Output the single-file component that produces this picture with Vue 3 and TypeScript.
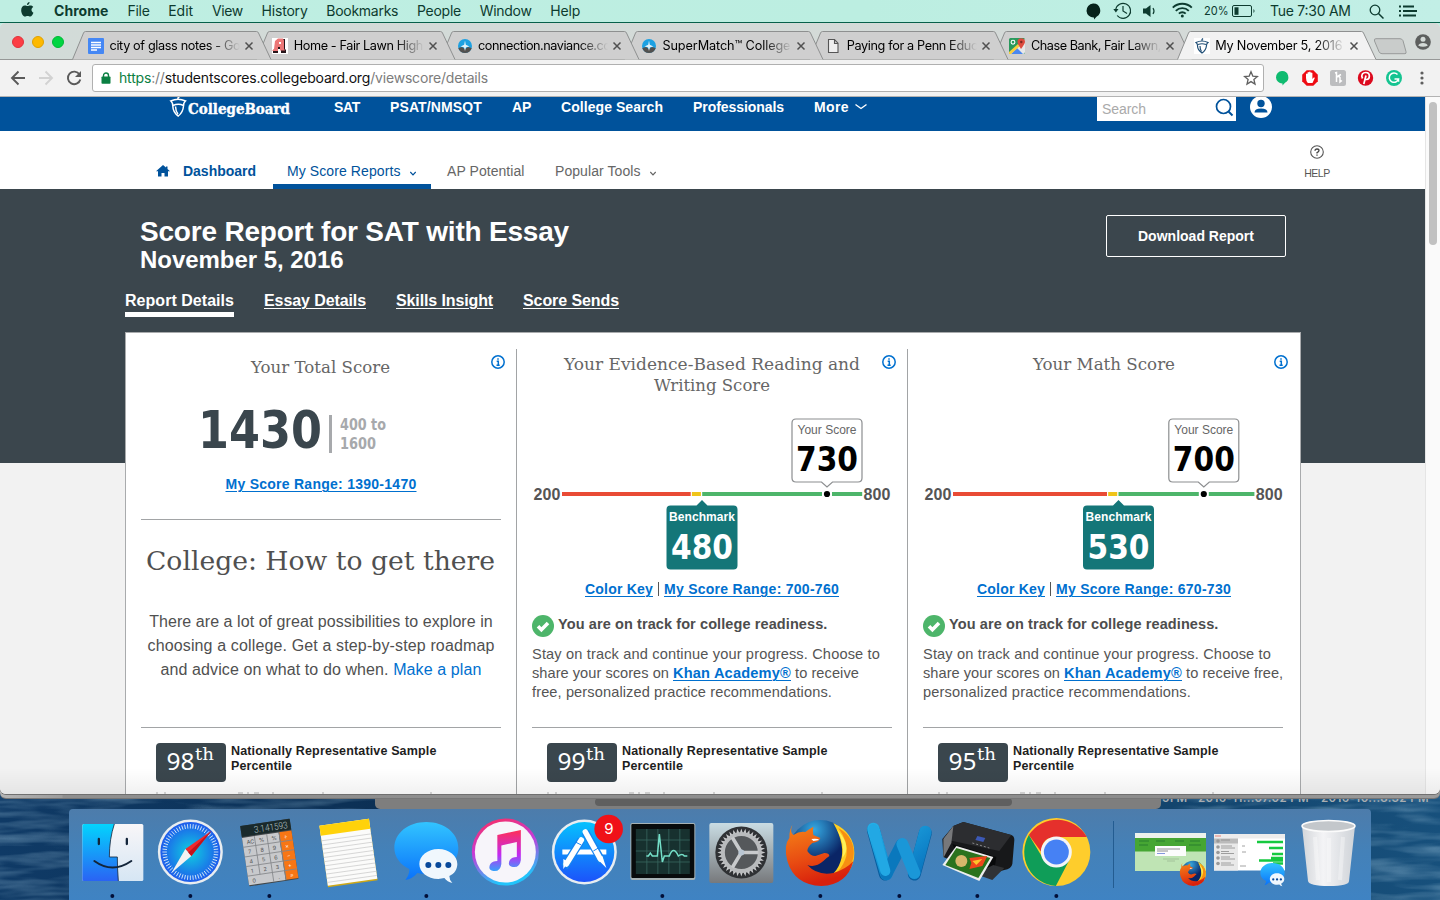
<script setup lang="ts">
interface Tab { title: string; width: number; icon: string }
interface Subject {
  heading: { text: string; x: number; y: number; width: number }[]
  score: string
  scoreX: number
  benchmark: string
  benchmarkX: number
  range: string
  percentile: string
  redEnd: number
  maxX: number
}

// Spaces the letters of a label so that it fills the given width.
const vFit = {
  mounted(el: HTMLElement, binding: { value: number }) {
    const range = document.createRange()
    range.selectNodeContents(el)
    const natural = range.getBoundingClientRect().width
    const count = (el.textContent ?? '').length
    if (count > 0) el.style.letterSpacing = `${(binding.value - natural) / count}px`
  },
}

const menus = [
  { label: 'File', width: 22 },
  { label: 'Edit', width: 25 },
  { label: 'View', width: 31 },
  { label: 'History', width: 46 },
  { label: 'Bookmarks', width: 72 },
  { label: 'People', width: 44 },
  { label: 'Window', width: 52 },
  { label: 'Help', width: 30 },
]

const tabs: Tab[] = [
  { title: 'city of glass notes - Goo', width: 138, icon: 'docs' },
  { title: 'Home - Fair Lawn High S', width: 140, icon: 'home' },
  { title: 'connection.naviance.com', width: 143, icon: 'naviance' },
  { title: 'SuperMatch™ College', width: 128, icon: 'naviance' },
  { title: 'Paying for a Penn Educa', width: 138, icon: 'page' },
  { title: 'Chase Bank, Fair Lawn,', width: 130, icon: 'maps' },
  { title: 'My November 5, 2016', width: 127, icon: 'acorn' },
]

const siteLinks = [
  { label: 'SAT', width: 26 },
  { label: 'PSAT/NMSQT', width: 92 },
  { label: 'AP', width: 19 },
  { label: 'College Search', width: 102 },
  { label: 'Professionals', width: 91 },
  { label: 'More', width: 35 },
]

const reportTabs = [
  { label: 'Report Details', width: 109 },
  { label: 'Essay Details', width: 102 },
  { label: 'Skills Insight', width: 97 },
  { label: 'Score Sends', width: 96 },
]

const subjects: Subject[] = [
  {
    heading: [
      { text: 'Your Evidence-Based Reading and', x: 32, y: 21, width: 296 },
      { text: 'Writing Score', x: 122, y: 42, width: 116 },
    ],
    score: '730', scoreX: 295, benchmark: '480', benchmarkX: 170,
    range: '700-760', percentile: '99', redEnd: 158.7, maxX: 331.5,
  },
  {
    heading: [{ text: 'Your Math Score', x: 110, y: 21, width: 142 }],
    score: '700', scoreX: 280.8, benchmark: '530', benchmarkX: 195.5,
    range: '670-730', percentile: '95', redEnd: 184, maxX: 332.7,
  },
]

const calcKeys = ['AC', '%', '%', '÷', '7', '8', '9', '×', '4', '5', '6', '−', '1', '2', '3', '+']
const ticks = Array.from({ length: 60 }, (_, i) => i * 6)
const teeth = Array.from({ length: 36 }, (_, i) => i * 10)
</script>

<template>
  <div class="desktop">
    <svg class="wallpaper" viewBox="0 0 1440 110" preserveAspectRatio="none">
      <defs>
        <linearGradient id="sea" x1="0" x2="1"><stop offset="0" stop-color="#0f3a66" /><stop offset=".4" stop-color="#0a2b4c" /><stop offset="1" stop-color="#17507c" /></linearGradient>
        <filter id="waves" x="0" y="0" width="100%" height="100%"><feTurbulence type="fractalNoise" baseFrequency=".014 .09" numOctaves="3" seed="8" /><feColorMatrix values="0 0 0 0 .3  0 0 0 0 .5  0 0 0 0 .66  1.3 0 0 0 -.5" /></filter>
      </defs>
      <rect width="1440" height="110" fill="url(#sea)" />
      <rect width="1440" height="110" filter="url(#waves)" opacity=".75" />
    </svg>
    <div class="files"><span v-fit="24">5 PM</span><span v-fit="111">2016-11...07.02 PM</span><span v-fit="108">2016-10...8.32 PM</span></div>
    <div class="back-window"><i></i></div>
    <div class="under-window"></div>

    <header class="menubar">
      <svg class="apple" viewBox="0 0 14 16"><path d="M9.2 0c.2 1.600-1.200 3.200-2.700 3.100C6.300 1.600 7.700.2 9.200 0zM11.300 8.300c0-1.500.8-2.500 1.900-3.100-.8-1.100-2-1.600-3.200-1.600-1.200 0-2.100.7-2.900.7-.8 0-1.700-.7-2.900-.7C2 3.700.2 5.400.2 8.700c0 3.400 2.200 6.900 4.100 6.900 1 0 1.500-.6 2.800-.6s1.700.6 2.700.6c1.600 0 3-2.400 3.600-4.100-1.200-.5-2.100-1.700-2.100-3.200z" /></svg>
      <b v-fit="54.500" class="menu-app">Chrome</b>
      <span v-for="m in menus" :key="m.label" v-fit="m.width" class="menu-item">{{ m.label }}</span>
      <svg class="status" viewBox="0 0 360 22">
        <path d="M13 3.500a7 7 0 0 1 3.500 13.200L14 19.500v-2A7 7 0 0 1 13 3.500z" fill="#06231b" />
        <g fill="none" stroke="#0d3b2f" stroke-width="1.200"><path d="M35.700 9.500a7.500 7.500 0 1 1 1.500 6" /><path d="M43 6v5l4 2.500" /></g>
        <path d="M33.300 9h5.200l-2.600 3.600z" fill="#0d3b2f" />
        <path d="M63 8.500h3l4.500-3.500v12L66 13.500h-3z" fill="#0d3b2f" /><path d="M73 8q2 3 0 6" fill="none" stroke="#0d3b2f" stroke-width="1.200" />
        <g fill="none" stroke="#0d3b2f" stroke-width="1.900"><path d="M92.800 7.700a13.500 13.500 0 0 1 19 0M95.800 10.800a9.200 9.200 0 0 1 13 0M98.900 13.700a4.800 4.800 0 0 1 6.800 0" /></g><circle cx="102.300" cy="16" r="1.500" fill="#0d3b2f" />
        <text x="124" y="15" textLength="24.500" lengthAdjust="spacingAndGlyphs" font-size="12">20%</text>
        <rect x="152.500" y="5.500" width="19" height="11" rx="1.500" fill="none" stroke="#0d3b2f" /><rect x="154.500" y="7.300" width="4" height="7.500" fill="#0d3b2f" /><path d="M173.500 9q2 2 0 4z" fill="#0d3b2f" />
        <text x="190" y="16" textLength="81" font-size="14">Tue 7:30 AM</text>
        <circle cx="295" cy="10" r="4.800" fill="none" stroke="#0d3b2f" stroke-width="1.300" /><path d="M298.500 13.500l5 5" stroke="#0d3b2f" stroke-width="1.500" />
        <path d="M319 6.500h2M323 6.500h11M319 11h2M323 11h14M319 15.500h2M323 15.500h13" stroke="#0d3b2f" stroke-width="1.900" />
      </svg>
    </header>

    <main class="window">
      <div class="tabstrip">
        <div class="lights"><i class="red"></i><i class="amber"></i><i class="green"></i></div>
        <div v-for="(t, i) in tabs" :key="t.title" class="tab" :class="[`tab-${i}`, { active: i === 6 }]">
          <svg class="shape" viewBox="0 0 200 30"><path d="M.5 28.500L11.500 2q.6-1.500 2-1.500h171q1.400 0 2 1.500L199 28.500" /></svg>
          <svg class="favicon" viewBox="0 0 16 16">
            <g v-if="t.icon === 'docs'"><rect width="16" height="16" rx="1" fill="#4587f4" /><path d="M3 4.500h10M3 7h10M3 9.500h10M3 12h6" stroke="#fff" stroke-width="1.300" /></g>
            <g v-else-if="t.icon === 'home'"><rect width="16" height="16" fill="#fff" /><path d="M1 15V12l2-1 1-8 3-2h6v10l1 1v3h-5v-4H6v4z" fill="#27151a" /><path d="M0 13l2-2 1-8 3-2.500h5l1 2v8l1 2H8V9H6v4z" fill="#ec7777" /><path d="M7 4h2v2H7z" fill="#fff" /></g>
            <g v-else-if="t.icon === 'naviance'"><circle cx="8" cy="8" r="7" fill="#1da1e2" /><path d="M1.300 10a7 7 0 0 0 13.400 0L11 9l-3 2-3-2z" fill="#52514f" /><path d="M8 2.500l.8 4.200L12.500 8.500 9 9.300 8 13 7 9.300 3.500 8.500l3.700-1.800z" fill="#e3f2f9" /></g>
            <path v-else-if="t.icon === 'page'" d="M3.500 1.500h6l3.500 3.700v9.300H3.500zM9.500 1.500v4H13" fill="#eee" stroke="#555" stroke-width="1.100" />
            <g v-else-if="t.icon === 'maps'"><rect width="16" height="16" rx="1.500" fill="#29995c" /><path d="M0 16L16 1v13q0 2-2 2z" fill="#e8e8e8" /><path d="M2 16l6-6 6 6z" fill="#4a87f1" /><path d="M0 14L9 6l2 2-9 8H0z" fill="#f9cd3d" /><path d="M12 11Q8.500 5.500 8.500 4a3.700 3.700 0 0 1 7.500 0q0 1.500-4 7z" fill="#dd4b3e" /><circle cx="12.300" cy="4" r="1.200" fill="#7c2720" /><circle cx="4" cy="4.200" r="1.900" fill="none" stroke="#fff" stroke-width="1.100" /></g>
            <g v-else><rect width="16" height="16" fill="#fff" /><path d="M2 4.500q6-3 12 0-1.500 1-1.500 3Q12 12.500 8 15 3.500 12 3.500 7.500q0-2-1.500-3zM4 6.500q4-1.500 8 0M8 3V1.500L9 .5M6 8q0 3.500 1.500 5.500" fill="none" stroke="#204f76" stroke-width="1.200" /></g>
          </svg>
          <div class="title"><span v-fit="t.width">{{ t.title }}</span></div>
          <svg class="close" viewBox="0 0 8 8"><path d="M.5.5l7 7M7.500.5l-7 7" stroke="#505050" stroke-width="1.500" /></svg>
        </div>
        <svg class="newtab" viewBox="0 0 34 18"><path d="M3 .7h24q2 0 3 2l3 11q.5 2-1 2H9q-2 0-3-2L1.500 3Q.700.700 3 .700z" fill="#c9cccb" stroke="#989b9a" /></svg>
        <svg class="person" viewBox="0 0 16 16"><circle cx="8" cy="8" r="7.800" fill="#5d5f5e" /><circle cx="8" cy="5.300" r="2.500" fill="#d4dad7" /><path d="M3.300 11.800Q4 9 8 9t4.700 2.800q-4.700 1.800-9.400 0z" fill="#d4dad7" /></svg>
      </div>

      <div class="toolbar">
        <svg class="navicons" viewBox="0 0 92 36">
          <g fill="none" stroke-width="1.900"><path d="M25 18H12.500M18.500 11.500L12 18l6.500 6.500" stroke="#5a5a5a" /><path d="M39 18h12.500M45.500 11.500L52 18l-6.500 6.500" stroke="#d2d2d2" /><path d="M79.500 14.500a6.300 6.300 0 1 0 .8 5" stroke="#5a5a5a" /></g><path d="M81 11v6h-6z" fill="#5a5a5a" />
        </svg>
        <div class="omnibox">
          <svg class="lock" viewBox="0 0 10 12"><rect x=".5" y="4.500" width="9" height="7.200" rx=".8" fill="#0b8043" /><path d="M2.500 5V3.500a2.500 2.500 0 0 1 5 0V5" fill="none" stroke="#0b8043" stroke-width="1.400" /></svg>
          <span v-fit="369" class="url"><span class="secure">https</span><span class="dim">://</span>studentscores.collegeboard.org<span class="dim">/viewscore/details</span></span>
          <svg class="star" viewBox="0 0 16 16"><path d="M8 1.800l1.800 4.300 4.600.4-3.500 3 1.100 4.600L8 11.600l-4 2.500 1.100-4.600-3.500-3 4.600-.4z" fill="none" stroke="#606060" stroke-width="1.300" /></svg>
        </div>
        <svg class="extensions" viewBox="0 0 170 36">
          <path d="M12 11a6.200 6.200 0 0 1 3 11.700L12.500 25.500v-2A6.200 6.200 0 0 1 12 11z" fill="#0fbb70" />
          <path d="M36.700 10.200h6.600l4.500 4.600v6.400l-4.500 4.600h-6.600l-4.500-4.600v-6.400z" fill="#ee0b13" /><path d="M36 18v-4q.8-1 1.500 0v-1.500q.8-1 1.600 0V12q.8-1 1.600 0v1q1-1 1.700 0v6l1.300-1.500q1.500-.3 1 .7L42.500 23h-4.700Q36 21 36 18z" fill="#fff" />
          <rect x="60" y="10" width="16" height="16" rx="2.500" fill="#bcbdbf" /><path d="M65 13l1.500-.5V22M66 17.500q3-2 4 0V22l2-1.500M66.500 17l4.500-2.500" fill="none" stroke="#fff" stroke-width="1.500" />
          <circle cx="95.500" cy="18" r="7.700" fill="#dc0a1e" /><path d="M92.500 18.500c-2-4 .5-6 3.300-6 5 0 4.200 7 .8 7q-1.500 0-1.800-1.200M96 15.500L93.800 24" fill="none" stroke="#fff" stroke-width="1.700" />
          <circle cx="124" cy="18" r="8" fill="#15c491" /><path d="M127.500 14.500a4.700 4.700 0 1 0 1 4.500h-4M128.500 19v2.800" fill="none" stroke="#fff" stroke-width="1.500" />
          <g fill="#5e5e5e"><circle cx="152" cy="13" r="1.600" /><circle cx="152" cy="18" r="1.600" /><circle cx="152" cy="23" r="1.600" /></g>
        </svg>
      </div>

      <div class="viewport">
        <div class="page">
          <nav class="site-nav">
            <svg class="cb-logo" viewBox="0 0 122 24"><path d="M.8 4Q8 .5 15.500 4 13.500 5.500 13.500 9 13 15.500 8.300 19 3 15.500 2.800 9q0-3.500-2-5zM3 8.500q5.500-2.500 10.500 0M8 2.500q-.500-2 1.500-3M5.500 9.500q.2 5 2.500 7.500" fill="none" stroke="#fff" stroke-width="1.500" /><text x="18" y="17" textLength="102" lengthAdjust="spacingAndGlyphs" font-size="15.500" fill="#fff" stroke="#fff" stroke-width=".4">CollegeBoard</text></svg>
            <a v-for="l in siteLinks" :key="l.label" v-fit="l.width">{{ l.label }}</a>
            <svg class="more" viewBox="0 0 12 8"><path d="M.5 1.500L6 5.500l5.500-4" fill="none" stroke="#fff" stroke-width="1.400" /></svg>
            <div class="search"><span v-fit="44">Search</span><svg viewBox="0 0 20 20"><circle cx="9.500" cy="9.500" r="7" fill="none" stroke="#00529b" stroke-width="1.700" /><path d="M14.500 14.500l4 4" stroke="#00529b" stroke-width="2" /></svg></div>
            <svg class="account" viewBox="0 0 22 22"><circle cx="11" cy="11" r="11" fill="#fff" /><circle cx="11" cy="7.500" r="3.700" fill="#00529b" /><path d="M4.500 16.500q0-4 6.500-4t6.500 4z" fill="#00529b" /></svg>
          </nav>

          <nav class="sub-nav">
            <div class="dash"><svg viewBox="0 0 14 12"><path d="M7 0l3 2.500V1.500h1.500V4L14 6.300h-2V11.500H8.500V8h-3v3.500H2V6.300H0z" fill="#00529b" /></svg><b v-fit="73">Dashboard</b></div>
            <div class="current"><span v-fit="113.500">My Score Reports</span><svg viewBox="0 0 6 5"><path d="M.3 1L3 3.800 5.700 1" fill="none" stroke="#00529b" stroke-width="1.200" /></svg></div>
            <span v-fit="77.500" class="plain ap">AP Potential</span>
            <span v-fit="85.500" class="plain">Popular Tools</span>
            <svg class="caret" viewBox="0 0 6 5"><path d="M.3 1L3 3.800 5.700 1" fill="none" stroke="#666" stroke-width="1.200" /></svg>
            <div class="help"><svg viewBox="0 0 14 14"><circle cx="7" cy="7" r="6.300" fill="none" stroke="#555" stroke-width="1.100" /><path d="M5 5.700Q5 4 7 4t2 1.600Q9 6.700 7 7.700v.8M7 9.500v1.200" fill="none" stroke="#444" stroke-width="1.300" /></svg><span v-fit="25.500">HELP</span></div>
          </nav>

          <section class="hero">
            <div class="hero-top">
              <div><h1><span v-fit="429">Score Report for SAT with Essay</span></h1><h2><span v-fit="203.500">November 5, 2016</span></h2></div>
              <div class="download"><span v-fit="116">Download Report</span></div>
            </div>
            <div class="report-tabs"><a v-for="(r, i) in reportTabs" :key="r.label" :class="{ on: i === 0 }"><span v-fit="r.width">{{ r.label }}</span></a></div>
          </section>

          <section class="card">
            <article class="column">
              <svg class="info" viewBox="0 0 14 14"><circle cx="7" cy="7" r="6.200" /><path d="M5.700 6.200h1.600v4M5.500 10.300h3.200M7 3.200v1.500" /></svg>
              <svg class="slab total-heading" viewBox="0 0 360 30"><text x="110" y="24" textLength="139" lengthAdjust="spacingAndGlyphs" font-size="16.500">Your Total Score</text></svg>
              <svg class="slab total" viewBox="0 0 360 50"><text class="big" x="57" y="43" textLength="124" lengthAdjust="spacingAndGlyphs" font-size="52">1430</text><rect x="188" y="10" width="3" height="38" fill="#a7a9ac" /><text class="range" x="199" y="25" textLength="46" lengthAdjust="spacingAndGlyphs" font-size="15.500">400 to</text><text class="range" x="199" y="44" textLength="36" lengthAdjust="spacingAndGlyphs" font-size="15.500">1600</text></svg>
              <div class="links total-link"><a v-fit="191">My Score Range: 1390-1470</a></div>
              <hr class="rule-a" />
              <svg class="slab college" viewBox="0 0 360 35"><text x="5" y="25" textLength="349" lengthAdjust="spacingAndGlyphs" font-size="25.500">College: How to get there</text></svg>
              <p class="plan">
                <span v-fit="343.500">There are a lot of great possibilities to explore in</span>
                <span v-fit="347">choosing a college. Get a step-by-step roadmap</span>
                <span v-fit="321">and advice on what to do when. <a>Make a plan</a></span>
              </p>
              <hr class="rule-b" />
              <div class="percentile">
                <svg viewBox="0 0 70 39"><rect width="70" height="39" rx="4" fill="#3a464d" /><text class="rank" x="10.500" y="27" textLength="28" lengthAdjust="spacingAndGlyphs" font-size="23.500">98</text><text x="39" y="17" textLength="19" lengthAdjust="spacingAndGlyphs" font-size="16.500">th</text></svg>
                <div><b v-fit="205.500">Nationally Representative Sample</b><b v-fit="61">Percentile</b></div>
              </div>
              <svg class="peek" viewBox="0 0 360 2"><path d="M15 1h2M23 1h2M97 1h5M106 1h2M113 1h5M131 1h2M181 1h2M289 1h2" stroke="#b3b3b3" /></svg>
            </article>

            <article v-for="s in subjects" :key="s.score" class="column">
              <svg class="info" viewBox="0 0 14 14"><circle cx="7" cy="7" r="6.200" /><path d="M5.700 6.200h1.600v4M5.500 10.300h3.200M7 3.200v1.500" /></svg>
              <svg class="slab heading" viewBox="0 0 360 50"><text v-for="h in s.heading" :key="h.text" :x="h.x" :y="h.y" :textLength="h.width" lengthAdjust="spacingAndGlyphs" font-size="16.500">{{ h.text }}</text></svg>
              <svg class="chart" viewBox="0 0 360 165">
                <text class="end" x="1.500" y="90" textLength="27">200</text><text class="end" :x="s.maxX" y="90" textLength="27">800</text>
                <rect x="30" y="82" :width="s.redEnd - 30" height="4" fill="#e94b35" />
                <rect :x="s.redEnd + 1.200" y="82" width="9" height="4" fill="#f0c419" />
                <rect :x="s.redEnd + 11.500" y="82" :width="s.scoreX - 5 - s.redEnd - 11.500" height="4" fill="#4db56a" />
                <rect :x="s.scoreX + 5" y="82" :width="s.maxX - 1.300 - s.scoreX - 5" height="4" fill="#4db56a" />
                <circle :cx="s.scoreX" cy="84" r="3.100" />
                <g :transform="`translate(${s.scoreX} 0)`">
                  <path d="M-31 9h62q4 0 4 4v55q0 4-4 4H5.500L0 77l-5.500-5H-31q-4 0-4-4V13q0-4 4-4z" fill="#fff" stroke="#8c8e90" stroke-width="1.200" />
                  <text class="label" x="-29.500" y="24" textLength="59">Your Score</text><text class="number" x="-31" y="61" textLength="62" lengthAdjust="spacingAndGlyphs">{{ s.score }}</text>
                </g>
                <g :transform="`translate(${s.benchmarkX} 0)`">
                  <path d="M-31.500 95.500h26L0 90l5.500 5.500h26q4 0 4 4v56q0 4-4 4h-63q-4 0-4-4v-56q0-4 4-4z" fill="#147678" />
                  <text class="label bench" x="-33" y="111" textLength="66">Benchmark</text><text class="number white" x="-31" y="148.500" textLength="62" lengthAdjust="spacingAndGlyphs">{{ s.benchmark }}</text>
                </g>
              </svg>
              <div class="links"><a v-fit="68">Color Key</a><i></i><a v-fit="175">My Score Range: {{ s.range }}</a></div>
              <div class="track"><svg viewBox="0 0 22 22"><circle cx="11" cy="11" r="11" fill="#4db56a" /><path d="M6 11.300l3.400 3.400 6.600-6.600" fill="none" stroke="#fff" stroke-width="3.600" /></svg><b v-fit="269.500">You are on track for college readiness.</b></div>
              <p class="advice">
                <span v-fit="348">Stay on track and continue your progress. Choose to</span>
                <span class="mixed"><span v-fit="137">share your scores on</span><a v-fit="118">Khan Academy®</a><span v-fit="64">to receive</span><template v-if="s.score === '700'"><span v-fit="29">free,</span></template></span>
                <span v-if="s.score === '700'" v-fit="268">personalized practice recommendations.</span>
                <span v-else v-fit="300">free, personalized practice recommendations.</span>
              </p>
              <hr class="rule-c" />
              <div class="percentile">
                <svg viewBox="0 0 70 39"><rect width="70" height="39" rx="4" fill="#3a464d" /><text class="rank" x="10.500" y="27" textLength="28" lengthAdjust="spacingAndGlyphs" font-size="23.500">{{ s.percentile }}</text><text x="39" y="17" textLength="19" lengthAdjust="spacingAndGlyphs" font-size="16.500">th</text></svg>
                <div><b v-fit="205.500">Nationally Representative Sample</b><b v-fit="61">Percentile</b></div>
              </div>
              <svg class="peek" viewBox="0 0 360 2"><path d="M15 1h2M23 1h2M97 1h5M106 1h2M113 1h5M131 1h2M181 1h2M289 1h2" stroke="#b3b3b3" /></svg>
            </article>
          </section>
        </div>
        <div class="scrollbar"><i></i></div>
        <div class="bottom-fade"></div>
      </div>
    </main>

    <footer class="dock">
      <svg width="0" height="0" class="defs">
        <defs>
          <linearGradient id="finderL" x2="0" y2="1"><stop stop-color="#03d4fd" /><stop offset="1" stop-color="#2a63f4" /></linearGradient>
          <linearGradient id="finderR" x2="0" y2="1"><stop stop-color="#f8f6f8" /><stop offset="1" stop-color="#d6e6f4" /></linearGradient>
          <radialGradient id="safari"><stop stop-color="#0fd0e0" /><stop offset="1" stop-color="#1e5ceb" /></radialGradient>
          <linearGradient id="bubble" x2="0" y2="1"><stop stop-color="#32c4ff" /><stop offset="1" stop-color="#0a72fa" /></linearGradient>
          <linearGradient id="tunes" x2=".3" y2="1"><stop stop-color="#ff2d55" /><stop offset=".5" stop-color="#c63bd8" /><stop offset="1" stop-color="#21c4fb" /></linearGradient>
          <linearGradient id="note" x2="0" y2="1"><stop stop-color="#ff2f55" /><stop offset=".6" stop-color="#c32af2" /><stop offset="1" stop-color="#35a3fb" /></linearGradient>
          <linearGradient id="store" x2="0" y2="1"><stop stop-color="#05c1fe" /><stop offset="1" stop-color="#1c53fa" /></linearGradient>
          <linearGradient id="metal" x2="0" y2="1"><stop stop-color="#c9dce3" /><stop offset="1" stop-color="#77797c" /></linearGradient>
          <radialGradient id="globe" cx=".4" cy=".15"><stop stop-color="#35a9e2" /><stop offset="1" stop-color="#0a2566" /></radialGradient>
          <linearGradient id="fox" x2=".3" y2="1"><stop stop-color="#f58518" /><stop offset=".6" stop-color="#e84b12" /><stop offset="1" stop-color="#d8200c" /></linearGradient>
          <linearGradient id="word" x2="1" y2="1"><stop stop-color="#23aee7" /><stop offset="1" stop-color="#0772bd" /></linearGradient>
          <linearGradient id="bin"><stop stop-color="#d3d6da" /><stop offset=".4" stop-color="#f4f4f6" /><stop offset="1" stop-color="#cfd3d8" /></linearGradient>
          <g id="firefox">
            <circle r="32" fill="url(#globe)" />
            <path d="M13-29Q34-19 34 1q0 20-19 29Q5 35-8 30q22-2 28-20 6-16-7-39z" fill="#ffcf23" />
            <path d="M18-24q11 15 8 28-5 18-22 23 23 0 29-21Q36-14 18-24z" fill="#f78f12" /><path d="M17-22q8 15 5 28 10-12-5-28z" fill="#fff15a" />
            <path d="M-28-27q-3 7 1 10 6-4 12-3Q-8-25-7-25q-1 5 0 8l7 3q-1 4-8 5-5 4-5 8 3 5 8 5l9-3q5 0 5 3-3 2-6 5-8 7-16 4Q-3 24 13 21q13-4 20-12-6 24-32 25-27-1-34-25Q-37-7-31-14-31-23-28-27z" fill="url(#fox)" /><path d="M-9-13q6-1 8 1l-6 1z" fill="#fff" />
          </g>
          <g id="messages"><path d="M0-30c18 0 32 11 32 26S18 22 0 22q-5 0-9-1-5 6-12 7 4-5 4-11c-9-4-15-12-15-21 0-15 14-26 32-26z" fill="url(#bubble)" /><path d="M12-3c11 0 19 7 19 15 0 5-3 10-8 12q0 4 3 7-5-1-8-5l-6 1C1 27-7 20-7 12S1-3 12-3z" fill="#f0f7fd" /><g fill="#08499b"><circle cx="2" cy="13" r="3" /><circle cx="12" cy="13" r="3" /><circle cx="22" cy="13" r="3" /></g></g>
        </defs>
      </svg>

      <svg class="app" viewBox="-39.350 0 78.700 91"><rect x="-30" y="15" width="61" height="57" rx="1.500" fill="url(#finderR)" /><path d="M-28.500 15H2q-5 15-5 33h8q0 12 1 24h-34.500q-1.500 0-1.500-1.500v-54q0-1.500 1.500-1.500z" fill="url(#finderL)" /><g fill="none" stroke="#13253a" stroke-width="2"><path d="M2 15q-5 15-5 33h8q0 12 1 24" stroke-width=".8" /><path d="M-13.500 30v5M14.500 30v5" stroke-width="2.300" stroke-linecap="round" /><path d="M-18 52q18 13 37 0" stroke-linecap="round" /></g><circle class="run" cy="87" r="2" /></svg>
      <svg class="app" viewBox="-39.350 0 78.700 91"><circle cy="43" r="32.500" fill="#e9edf0" /><circle cy="43" r="30" fill="url(#safari)" /><path v-for="t in ticks" :key="t" d="M0 15v4.500" stroke="#e9f4fb" stroke-width=".8" :transform="`rotate(${t} 0 43)`" /><path d="M21 22L-5 40l6 7z" fill="#f0282d" /><path d="M-19 64L-5 40l6 7z" fill="#f2f2f2" /><path d="M21 22L1 47l-3-3.500z" fill="#c3131c" /><circle class="run" cy="87" r="2" /></svg>
      <svg class="app" viewBox="-39.350 0 78.700 91"><g transform="rotate(-8.500 0 43)"><rect x="-25" y="13" width="50" height="61" rx="1" fill="#42474a" /><rect x="-25" y="13" width="50" height="11" fill="#1a2a2c" /><text class="display" x="-12" y="22" textLength="34" lengthAdjust="spacingAndGlyphs" font-size="9.500" fill="#b9c9ca">3.141593</text><rect x="-25" y="25" width="37" height="48" fill="#c8c9cc" /><rect x="12.500" y="25" width="12.500" height="48" fill="#f77615" /><path d="M-25 34.500h50M-25 44.300h50M-25 54h50M-25 63.700h50M-12.500 25v38.700M0 25v48M12.500 25v48" stroke="#838589" stroke-width=".8" /><g font-size="5.500" fill="#4d4d4d"><text v-for="(k, i) in calcKeys" :key="i" :x="-21 + (i % 4) * 12.500" :y="32 + Math.floor(i / 4) * 9.700" :fill="i % 4 === 3 ? '#fff' : '#4d4d4d'">{{ k }}</text><text x="-21" y="71">0</text><text x="5" y="71">.</text><text x="17" y="71" fill="#fff">=</text></g></g><circle class="run" cy="87" r="2" /></svg>
      <svg class="app" viewBox="-39.350 0 78.700 91"><g transform="rotate(-8 0 43)"><rect x="-25" y="13" width="50" height="62" fill="#cda818" /><rect x="-25" y="13" width="50" height="60.500" fill="#fbfbfa" /><rect x="-25" y="13" width="50" height="10" fill="#ffd20a" /><path v-for="n in 11" :key="n" :d="`M-25 ${24 + n * 4.200}h50`" stroke="#c9c9c9" stroke-width=".7" /></g></svg>
      <svg class="app" viewBox="-39.350 0 78.700 91"><use href="#messages" y="43" /><circle class="run" cy="87" r="2" /></svg>
      <svg class="app" viewBox="-39.350 0 78.700 91"><circle cy="43" r="33.500" fill="url(#tunes)" /><circle cy="43" r="30.500" fill="#f7f5fa" /><path fill-rule="evenodd" d="M-8 26L15.500 21v30q-1 8-8 7-6-1-3-7 2-3 7-3V33L-4 36.500V55q-1 8-8 7-6-1-3-7 2-3 7-3z" fill="url(#note)" /></svg>
      <svg class="app" viewBox="-39.350 0 78.700 91"><circle cy="43" r="32.500" fill="#e8edf1" /><circle cy="43" r="30" fill="url(#store)" /><path d="M-22 43H22" stroke="#fff" stroke-width="5" /><path d="M-3 31l-17 27M1 23l17 30" stroke="#1785f0" stroke-width="8" /><path d="M-3 31l-15 24M1 23l15 27" stroke="#fff" stroke-width="5.500" stroke-linecap="round" /><path d="M-21 50l5 3-5 7zM13 50l5-3 4 12z" fill="#fff" /><path d="M-9 33l6 3M9 42l5-3" stroke="#1785f0" /><circle cx="24.300" cy="20" r="14.300" fill="#f01118" /><text x="20" y="25.500" font-size="15" fill="#fff">9</text></svg>
      <svg class="app" viewBox="-39.350 0 78.700 91"><rect x="-32" y="14" width="65" height="57" rx="2" fill="#a6b2b5" /><rect x="-31" y="15" width="63" height="54" rx="1" fill="#080b0c" /><rect x="-26.500" y="20" width="54" height="45" fill="#17312f" /><path d="M-15.500 20v45M-4.500 20v45M6.500 20v45M17.500 20v45M-26.500 31h54M-26.500 42h54M-26.500 53h54" stroke="#39675f" stroke-width=".8" /><path d="M-16 47h2l2-3 2 3h5l2-22 3 28 2-6h5q4-11 9 0 4-3 6 0h3" fill="none" stroke="#74dfc8" stroke-width="1.500" /><circle class="run" cy="87" r="2" /></svg>
      <svg class="app" viewBox="-39.350 0 78.700 91"><rect x="-32" y="14" width="64" height="60" rx="2" fill="url(#metal)" /><circle cy="43.500" r="26" fill="#2f3134" /><path v-for="t in teeth" :key="t" d="M-1.200 23l1.200-3.500 1.200 3.500v4h-2.400z" fill="#c8c9cb" :transform="`rotate(${t} 0 43.500)`" /><circle cy="43.500" r="18.500" fill="#55585b" stroke="#b9bbbd" stroke-width="4" /><path d="M0 43.500h17M0 43.500l-9-15M0 43.500l-9 15" stroke="#c8cacc" stroke-width="3.500" /><circle cy="43.500" r="3" fill="#b9c6d3" /></svg>
      <svg class="app" viewBox="-39.350 0 78.700 91"><use href="#firefox" y="43" /><circle class="run" cy="87" r="2" /></svg>
      <svg class="app" viewBox="-39.350 0 78.700 91"><g fill="none" stroke-linecap="round" stroke-linejoin="round"><path d="M-26 21l12 44M15 65L26 24" stroke="#065e9f" stroke-width="13" /><path d="M-26 20l13 45M15 64L26 23" stroke="url(#word)" stroke-width="12.500" /><path d="M-13 65L2 36" stroke="#0a78bd" stroke-width="12" /><path d="M3 35l12 29" stroke="#1a97d8" stroke-width="12" /><path d="M-26 20l12 42" stroke="#22a8e4" stroke-width="10" /></g><circle class="run" cy="87" r="2" /></svg>
      <svg class="app" viewBox="-39.350 0 78.700 91"><path d="M-24 17L-14 13 34 26q3 1 3 5l-2 24q-1 5-8 6L9 66l-43-18-1-18z" fill="#17181a" /><path d="M-24 17L-14 13 34 26 22 42-34 30z" fill="#2c2d30" /><path d="M-24 17L-34 30v19l8-15z" fill="#77787a" /><path d="M-25 35L19 48l-3 19-32-12z" fill="#08090a" /><path d="M-2 65L15 71l12-12-11-3z" fill="#303235" /><path d="M-21 37L16 48 2 72-35 56z" fill="#eee" /><path d="M-21 39L13 49 1 69-32 56z" fill="#2b731d" /><circle cx="-16" cy="52" r="6" fill="#d8b76b" /><path d="M-8 49l18-2-5 10-13 3 2-6z" fill="#f0471c" /><path d="M-5 52l10-2-6 6z" fill="#ffc42a" /><path d="M0 27l8 2-2 4-8-2z" fill="#3c59b6" /><path d="M-5 34l17 5" stroke="#88898b" stroke-dasharray="2 2" /><circle class="run" cy="87" r="2" /></svg>
      <svg class="app" viewBox="-39.350 0 78.700 91"><circle cy="43" r="34" fill="#fecd2c" /><path d="M-27.500 26A34 34 0 0 1 30.500 28H0q-15 0-15 15z" fill="#e5302c" /><path d="M-27.500 26A34 34 0 0 0-.5 77L13 51-13 50z" fill="#0f9d58" /><circle cy="43" r="15.500" fill="#f5f5f5" /><circle cy="43" r="12.500" fill="#4681f4" /><circle class="run" cy="87" r="2" /></svg>

      <i class="divider"></i>
      <svg class="thumb" viewBox="0 0 78 91"><rect y="24" width="71" height="38" fill="#bfe4b4" /><rect y="24" width="71" height="5" fill="#edf2ec" /><rect y="29" width="71" height="13.500" fill="#46a633" /><path d="M4 32h10M21 32h9M40 32h9M55 32h10M4 36h9M54 36h12" stroke="#379230" stroke-width="2" /><rect x="20" y="37" width="31" height="10" fill="#fcfcfc" /><path d="M22 40h23M22 42h11" stroke="#777" stroke-width=".8" /><path d="M22 44.500h8" stroke="#657bd4" stroke-width=".8" /><path d="M28 50h16M32 52h8" stroke="#9ab690" stroke-width=".7" /><use href="#firefox" transform="translate(58 64) scale(.38)" /></svg>
      <svg class="thumb second" viewBox="0 0 78 91"><rect y="25" width="71" height="36.500" fill="#fff" /><rect y="25" width="71" height="4.500" fill="#ececec" /><rect y="29.500" width="24" height="32" fill="#e9e9e9" /><rect y="29.500" width="24" height="5" fill="#bbb" /><g fill="#999"><circle cx="4" cy="32" r="1.800" /><circle cx="4" cy="38" r="1.800" /><circle cx="4" cy="43.500" r="1.800" /><circle cx="4" cy="49" r="1.800" /><circle cx="4" cy="54.500" r="1.800" /></g><path d="M7 31h9M7 37h11M7 39h14M7 42.500h8M7 44.500h13M7 48h9M7 50h14M7 54h10M7 56h13M28 37h3M28 43h4M26 57h6" stroke="#8a8a8a" stroke-width=".8" /><path d="M43 33h26M55 39h14M58 45h11M57 49h12M45 51.500h24M59 54.500h10" stroke="#16c940" stroke-width="2.700" /><path d="M1 27h6" stroke="#e8837b" /><use href="#messages" transform="translate(58.500 65.500) scale(.38)" /></svg>
      <svg class="trash" viewBox="0 0 56 91"><path d="M1 17l6 55q1 5 21 5t20-5l6-55z" fill="url(#bin)" /><path d="M14 28l3 43M28 29v44M42 28l-3 43" stroke="#fff" stroke-width="4" opacity=".35" /><ellipse cx="27.500" cy="17" rx="26.500" ry="5.500" fill="#c3c7cb" stroke="#fbfbfb" stroke-width="1.600" /></svg>
    </footer>
  </div>
</template>

<style>
html, body { margin: 0; overflow: hidden; }
</style>

<style scoped>
.desktop { position: relative; width: 1440px; height: 900px; overflow: hidden; background: #bfeee2; font-family: "Liberation Sans", Arial, sans-serif; }
.desktop * { box-sizing: border-box; }
svg { display: block; flex: none; overflow: visible; }
.wallpaper { position: absolute; left: 0; top: 790px; width: 1440px; height: 110px; overflow: hidden; }
.files { position: absolute; left: 1162px; top: 791px; display: flex; gap: 12px; font: 600 11.500px/14px Inter, sans-serif; color: #a9adb0; white-space: nowrap; }
.back-window { position: absolute; left: 375px; top: 795px; width: 786px; height: 14px; background: #7e7e7e; border-radius: 0 0 5px 5px; }
.back-window i { position: absolute; left: 220px; top: 3px; width: 417px; height: 8px; border-radius: 4px; background: #5f5f5f; }
.under-window { position: absolute; left: 0; top: 785px; width: 1440px; height: 14px; border-radius: 0 0 6px 6px; background: linear-gradient(90deg, #b5b5b5 0, #9c9c9c 62px, #8f8f8f 63px, #8d8d8d 1150px, #9c9c9c); border-bottom: 1px solid #777; }

.menubar { display: flex; align-items: center; height: 23px; background: linear-gradient(90deg, #bfeee2, #bceee1 60%, #c2efe6); border-bottom: 1px solid #07604a; padding-left: 21px; font: 14px/22px Inter, sans-serif; color: #0d3b2f; white-space: nowrap; }
.apple { width: 13px; height: 15px; fill: #0d3b2f; margin-top: -3px; }
.menu-app { margin-left: 20px; font-weight: 700; }
.menu-item { margin-left: 18.700px; }
.menu-app + .menu-item { margin-left: 19px; }
.status { position: absolute; left: 1080px; top: 0; width: 360px; height: 22px; fill: #0d3b2f; }

.window { position: relative; height: 771px; border-radius: 5px 5px 6px 6px; overflow: hidden; background: #f2f2f2; box-shadow: 0 1px 0 #707070; }
.tabstrip { position: relative; display: flex; height: 37px; background: linear-gradient(90deg, #d2dbd8, #d5dad8); border-bottom: 1px solid #969897; padding-left: 12px; }
.lights { display: flex; gap: 8px; width: 59.500px; padding-top: 13px; }
.lights i { width: 12px; height: 12px; border-radius: 50%; }
.red { background: #fc3e45; border: 1px solid #e0333c; }
.amber { background: #fdb900; border: 1px solid #e0a100; }
.green { background: #00d541; border: 1px solid #00b837; }
.tab { position: relative; display: flex; align-items: center; width: 184.300px; height: 29px; margin-top: 8px; padding-left: 16.500px; flex: none; }
.tab-0 { z-index: 7; } .tab-1 { z-index: 6; } .tab-2 { z-index: 5; } .tab-3 { z-index: 4; } .tab-4 { z-index: 3; } .tab-5 { z-index: 2; } .tab-6 { z-index: 9; }
.shape { position: absolute; left: 0; top: 0; width: 200px; height: 30px; fill: #cfcfcf; stroke: #8e9090; }
.active .shape { fill: #f2f2f2; }
.favicon { position: relative; width: 16px; height: 16px; }
.title { position: relative; width: 130px; margin-left: 5.500px; overflow: hidden; font: 12.700px/20px Inter, sans-serif; color: #000; white-space: nowrap; -webkit-mask-image: linear-gradient(90deg, #000 78%, transparent); mask-image: linear-gradient(90deg, #000 78%, transparent); }
.close { position: relative; width: 8px; height: 8px; margin-left: 5px; }
.newtab { width: 34px; height: 18px; margin: 15px 0 0 11px; }
.person { width: 16px; height: 16px; margin: 11px 0 0 8.500px; }

.toolbar { display: flex; align-items: center; height: 37px; background: #f2f2f2; border-bottom: 1px solid #b3b3b3; }
.navicons { width: 92px; height: 36px; }
.omnibox { display: flex; align-items: center; width: 1172px; height: 28px; border: 1px solid #b0b0b0; border-radius: 3px; background: #fff; padding: 0 4px 0 8px; }
.lock { width: 10px; height: 12px; }
.url { margin-left: 8px; font: 14px/20px Inter, sans-serif; color: #111; white-space: nowrap; }
.secure { color: #0b8043; }
.dim { color: #7c7c7c; }
.star { width: 16px; height: 16px; margin-left: auto; }
.extensions { width: 170px; height: 36px; margin-left: 6px; }

.viewport { position: relative; display: flex; height: 697px; overflow: hidden; }
.page { width: 1425px; height: 697px; background: #f2f2f2; overflow: hidden; }
.scrollbar { width: 15px; background: #fafafa; border-left: 1px solid #e5e5e5; padding: 5px 3px; }
.scrollbar i { display: block; width: 8px; height: 143px; border-radius: 4px; background: #c1c1c1; }
.bottom-fade { position: absolute; left: 0; bottom: 0; width: 1440px; height: 26px; background: linear-gradient(transparent, rgba(0, 0, 0, .055)); }

.site-nav { display: flex; height: 34px; background: #00529b; padding-left: 170px; font: bold 14px/20px "Liberation Sans", Arial, sans-serif; color: #fff; white-space: nowrap; }
.cb-logo { width: 122px; height: 24px; margin-right: 42px; font-family: "DejaVu Serif", serif; font-weight: 700; }
.site-nav a { margin-right: 30px; }
.site-nav a:nth-of-type(6) { margin-right: 6px; }
.more { width: 12px; height: 8px; margin-top: 6px; }
.search { display: flex; width: 139px; height: 24px; margin-left: auto; padding-left: 5px; background: #fff; color: #aaa; font-weight: 400; line-height: 24px; }
.search svg { width: 20px; height: 20px; margin-left: auto; margin-right: 2px; }
.account { width: 22px; height: 22px; margin: -1px 153px 0 14px; }

.sub-nav { display: flex; height: 58px; background: #fff; padding: 30px 95px 0 156px; font-size: 14px; line-height: 20px; white-space: nowrap; color: #666; }
.dash { display: flex; width: 117px; color: #00529b; }
.dash svg { width: 14px; height: 12px; margin: 4px 13px 0 0; }
.current { display: flex; width: 158px; height: 28px; border-bottom: 5px solid #00529b; padding-left: 14px; color: #00529b; }
.current svg, .caret { width: 6px; height: 5px; margin: 10px 0 0 9px; }
.plain.ap { margin: 0 30.500px 0 16px; }
.help { display: flex; flex-direction: column; align-items: center; width: 26px; margin: -16.500px 0 0 auto; font-size: 10.500px; line-height: 14px; color: #555; }
.help svg { width: 14px; height: 14px; margin-bottom: 7px; }

.hero { height: 274px; background: #3b464d; padding: 26px 139px 0 140px; color: #fff; white-space: nowrap; }
.hero-top { display: flex; justify-content: space-between; height: 58px; }
h1 { margin: 1px 0 0; font-size: 28px; line-height: 32px; }
h2 { margin: -4px 0 0; font-size: 24px; line-height: 32px; }
.download { width: 180px; height: 42px; border: 1px solid #fff; border-radius: 2px; font-weight: 700; font-size: 14px; line-height: 41px; text-align: center; }
.report-tabs { display: flex; gap: 30px; margin: 16px 0 0 -15px; font-weight: 700; font-size: 16px; line-height: 24px; }
.report-tabs a { height: 28px; text-decoration: underline; text-underline-offset: 2px; text-decoration-thickness: 1px; }
.report-tabs a.on { text-decoration: none; border-bottom: 5px solid #fff; }

.card { position: relative; display: grid; grid-template-columns: 391px 391px 392px; width: 1176px; height: 500px; margin: -131px 0 0 125px; padding-top: 16px; border: 1px solid #a9abad; background: #fff; }
.column { position: relative; padding: 0 15px; border-right: 1px solid #a2a4a6; }
.column:last-child { border-right: 0; }
.info { position: absolute; left: 365px; top: 6px; width: 14px; height: 14px; fill: none; stroke: #0070cf; stroke-width: 1.500; }
.column:last-child .info { left: 366px; }
.slab { width: 360px; font-family: "DejaVu Serif", serif; fill: #666; }
.total-heading { height: 30px; }
.total { height: 50px; margin-top: 26px; }
.big { font-family: "DejaVu Sans", sans-serif; font-weight: 700; fill: #3a464d; }
.range { font-family: "DejaVu Sans", sans-serif; font-weight: 700; fill: #a7a9ac; }
.total-link { margin-top: 19px !important; }
hr { width: 360px; height: 1px; border: 0; margin: 0; background: #a2a4a6; }
.rule-a { margin-top: 25px; }
.college { height: 35px; margin-top: 25px; fill: #505050; }
.plan { display: flex; flex-direction: column; align-items: center; margin: 30px 0 45px; font-size: 16px; line-height: 24px; color: #505050; white-space: nowrap; }
.plan a { color: #0070cf; }
.percentile { display: flex; gap: 5px; margin: 15px 0 0 15px; }
.percentile svg { width: 70px; height: 39px; font-family: "DejaVu Serif", serif; fill: #fff; }
.percentile .rank { font-family: "Noto Sans", sans-serif; font-weight: 400; }
.percentile div { display: flex; flex-direction: column; align-items: flex-start; padding-top: 1px; font-size: 12.500px; line-height: 15px; color: #1e1e1e; white-space: nowrap; }
.peek { width: 360px; height: 2px; margin-top: 10px; }
.heading { height: 50px; }
.chart { width: 360px; height: 165px; margin-top: 11px; }
.end { font: bold 16px "Liberation Sans", Arial, sans-serif; fill: #555; }
.label { font: 12px "Liberation Sans", Arial, sans-serif; fill: #666; }
.bench { font-weight: 700; fill: #fff; }
.number { font: bold 33px "DejaVu Sans", sans-serif; fill: #000; }
.white { fill: #fff; }
.links { display: flex; justify-content: center; margin-top: 4px; font-weight: 700; font-size: 14px; line-height: 20px; color: #0070cf; white-space: nowrap; }
.links a { text-decoration: underline; text-underline-offset: 2px; text-decoration-thickness: 1px; }
.links i { width: 1px; height: 14px; margin: 3px 5px 0; background: #555; }
.track { display: flex; gap: 4px; height: 22px; margin-top: 16px; font-size: 14.500px; line-height: 18px; color: #4d4d4d; white-space: nowrap; }
.track svg { width: 22px; height: 22px; }
.advice { display: flex; flex-direction: column; align-items: flex-start; margin: 8px 0 25px; font-size: 14.600px; line-height: 19px; color: #555; white-space: nowrap; }
.mixed { display: flex; gap: 4px; }
.mixed a { color: #0070cf; font-weight: 700; text-decoration: underline; text-underline-offset: 2px; text-decoration-thickness: 1px; }

.dock { position: absolute; left: 69px; top: 809px; display: flex; width: 1302px; height: 91px; padding-left: 3.650px; border-radius: 4px 4px 0 0; background: linear-gradient(#4d7cab, #4481b8 45%, #3f83c3); }
.defs { position: absolute; }
.app { width: 78.700px; height: 91px; font-family: Inter, sans-serif; }
.run { fill: #020f38; }
.display { font-family: Roboto, sans-serif; font-weight: 300; }
.divider { width: 1px; height: 67px; margin: 12px 21px 0 17.500px; background: #235c91; }
.thumb { width: 78px; height: 91px; }
.second { margin-left: 1px; }
.trash { width: 56px; height: 91px; margin-left: 8.500px; }
</style>
